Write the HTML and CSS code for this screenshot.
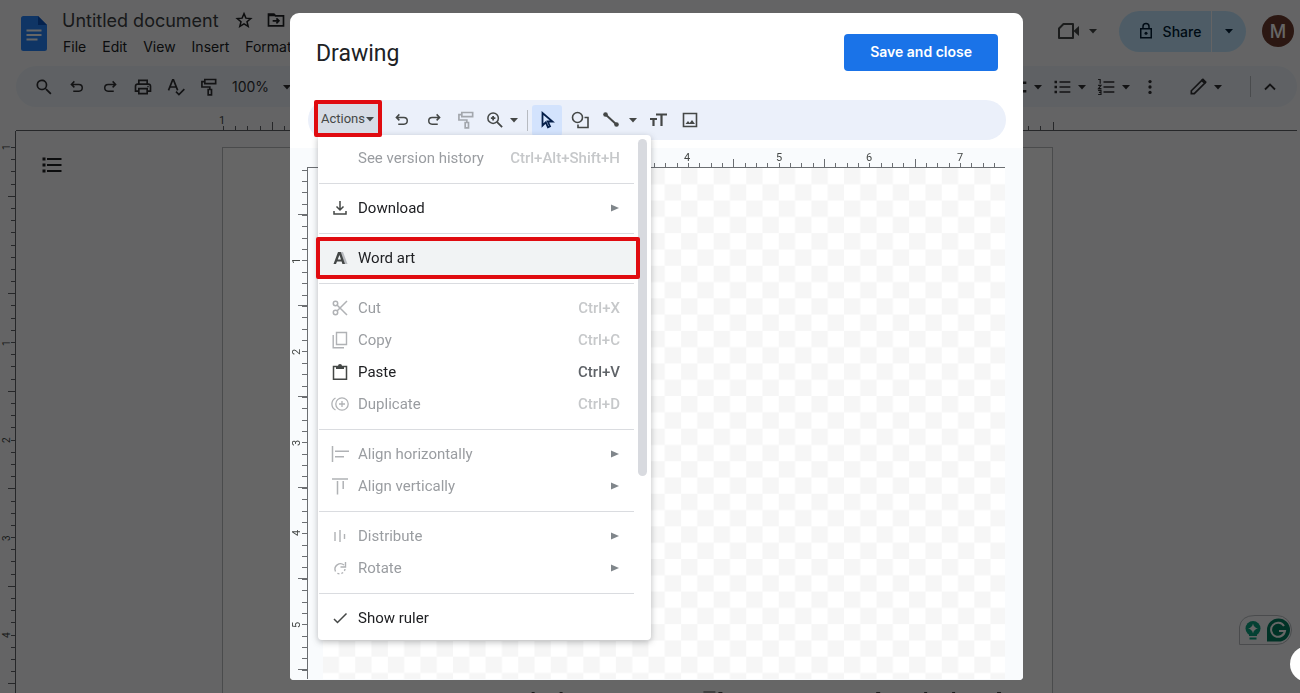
FILE: index.html
```html
<!DOCTYPE html>
<html lang="en">
<head>
<meta charset="utf-8">
<title>Untitled document</title>
<link rel="stylesheet" href="styles.css">
</head>
<body>
<svg class="defs" aria-hidden="true">
  <symbol id="undo" viewBox="0 0 24 24"><path d="M8.500 4.500 4.500 8.500l4 4M5 8.500h9.500a4.500 4.500 0 0 1 0 9H7" fill="none" stroke="currentColor" stroke-width="2"/></symbol>
  <symbol id="redo" viewBox="0 0 24 24"><path d="m15.500 4.500 4 4-4 4M19 8.500H9.500a4.500 4.500 0 0 0 0 9H17" fill="none" stroke="currentColor" stroke-width="2"/></symbol>
  <symbol id="paint" viewBox="0 0 24 24"><path d="M7 3h13v5H7zM7 5.500H3.500V12H13v3M11 15h4v6.500h-4z" fill="none" stroke="currentColor" stroke-width="2"/></symbol>
  <symbol id="down" viewBox="0 0 10 10"><path d="M1 3h8L5 7.500z" fill="currentColor"/></symbol>
  <symbol id="right" viewBox="0 0 10 10"><path d="M1 1.500 9 5 1 8.500z" fill="currentColor"/></symbol>
</svg>

<div class="app">
  <header class="header">
    <svg class="logo" viewBox="0 0 26 35"><path d="M2.500 0H17l9 9v23.500a2.500 2.500 0 0 1-2.500 2.500h-21A2.500 2.500 0 0 1 0 32.500v-30A2.500 2.500 0 0 1 2.500 0z" fill="#2684fc"/><path d="M17 0l9 9h-9z" fill="#0b55c4"/><path d="M5.500 14.500h15M5.500 19h15M5.500 23.500h11" stroke="#fff" stroke-width="2"/></svg>
    <div class="title-block">
      <div class="title-row">
        <span class="doc-title">Untitled document</span>
        <button class="plain" aria-label="Star"><svg class="i18" viewBox="0 0 24 24"><path d="m12 3.500 2.500 6 6.500.5-5 4.200 1.600 6.300L12 17.100l-5.600 3.400L8 14.200 3 10l6.500-.5z" fill="none" stroke="currentColor" stroke-width="2"/></svg></button>
        <button class="plain" aria-label="Move"><svg class="i20" viewBox="0 0 24 24"><path d="M3 5h6.500l2 2H21v12H3zM8 13h7M12.500 10l3 3-3 3" fill="none" stroke="currentColor" stroke-width="2"/><path d="M3 5h6.500l2 2.500H3z" fill="currentColor"/></svg></button>
      </div>
      <nav class="menubar"><button class="plain">File</button><button class="plain">Edit</button><button class="plain">View</button><button class="plain">Insert</button><button class="plain">Format</button></nav>
    </div>
    <div class="header-right">
      <button class="plain meet" aria-label="Meet"><svg class="i24" viewBox="0 0 24 24"><path d="M7.500 5H17v14H3V9.500z" fill="none" stroke="currentColor" stroke-width="2" stroke-linejoin="round"/><path d="M18 11.500 23 7v10l-5-4.500z" fill="currentColor"/></svg><svg class="i10" ><use href="#down"/></svg></button>
      <div class="share">
        <button class="share-main"><svg class="i18" viewBox="0 0 24 24"><path d="M5 9h14v12H5zM8 9V6a4 4 0 0 1 8 0v3" fill="none" stroke="currentColor" stroke-width="2"/><circle cx="12" cy="15" r="2" fill="currentColor"/></svg>Share</button>
        <button class="share-more" aria-label="Share options"><svg class="i10"><use href="#down"/></svg></button>
      </div>
      <button class="avatar">M</button>
    </div>
  </header>

  <div class="toolbar">
    <div class="tools-left">
      <button class="tool" aria-label="Search"><svg class="i20" viewBox="0 0 24 24"><path d="M15.500 14h-.8l-.3-.3A6.500 6.500 0 1 0 13.700 14.400l.3.300v.8l5.500 5.500 1.500-1.500zm-6 0a4.500 4.500 0 1 1 0-9 4.500 4.500 0 0 1 0 9z" fill="currentColor"/></svg></button>
      <button class="tool" aria-label="Undo"><svg class="i18"><use href="#undo"/></svg></button>
      <button class="tool" aria-label="Redo"><svg class="i18"><use href="#redo"/></svg></button>
      <button class="tool" aria-label="Print"><svg class="i20" viewBox="0 0 24 24"><path d="M7 8V4h10v4M7 17H3V11a2.500 2.500 0 0 1 2.500-2.500h13A2.500 2.500 0 0 1 21 11v6h-4M7 14h10v6H7z" fill="none" stroke="currentColor" stroke-width="2"/><circle cx="18" cy="11.500" r="1" fill="currentColor"/></svg></button>
      <button class="tool" aria-label="Spelling"><svg class="i20" viewBox="0 0 24 24"><path d="M3 16 8 3.500h1L14 16M5 12h7M12 17.500l3.500 3.500L22 14.500" fill="none" stroke="currentColor" stroke-width="2"/></svg></button>
      <button class="tool" aria-label="Paint format"><svg class="i20"><use href="#paint"/></svg></button>
      <button class="plain zoom">100%<svg class="i10"><use href="#down"/></svg></button>
    </div>
    <div class="tools-right">
      <button class="pair" aria-label="Checklist"><svg class="i20" viewBox="0 0 24 24"><path d="M5 7h17M5 17h17" stroke="currentColor" stroke-width="3"/></svg><svg class="i10"><use href="#down"/></svg></button>
      <button class="pair" aria-label="Bulleted list"><svg class="i20" viewBox="0 0 24 24"><path d="M9 6h13M9 12h13M9 18h13" stroke="currentColor" stroke-width="2"/><path d="M3 4.500h3v3H3zM3 10.500h3v3H3zM3 16.500h3v3H3z" fill="currentColor"/></svg><svg class="i10"><use href="#down"/></svg></button>
      <button class="pair" aria-label="Numbered list"><svg class="i20" viewBox="0 0 24 24"><path d="M9 6h13M9 12h13M9 18h13" stroke="currentColor" stroke-width="2"/><path d="M2.500 3H5v5M2.500 10H6l-3 4h3.500M2.500 16H6v5H2.500M3.500 18.500H6" fill="none" stroke="currentColor" stroke-width="1.400"/></svg><svg class="i10"><use href="#down"/></svg></button>
      <button class="more" aria-label="More"><svg class="i20" viewBox="0 0 24 24"><circle cx="12" cy="5.500" r="2"/><circle cx="12" cy="12" r="2"/><circle cx="12" cy="18.500" r="2"/></svg></button>
      <button class="pair mode" aria-label="Editing mode"><svg class="i20" viewBox="0 0 24 24"><path d="M4 20v-3.500L16.500 4l3.500 3.500L7.500 20z" fill="none" stroke="currentColor" stroke-width="2"/><path d="m16 3 2-1.500 4.500 4.500L21 8z" fill="currentColor"/></svg><svg class="i10"><use href="#down"/></svg></button>
      <span class="rule"></span>
      <button class="collapse" aria-label="Hide menus"><svg class="i20" viewBox="0 0 24 24"><path d="m6 15 6-6 6 6" fill="none" stroke="currentColor" stroke-width="2.200"/></svg></button>
    </div>
  </div>

  <svg class="ruler-x" shape-rendering="crispEdges">
    <path d="M16 23.500H1297" stroke="#5f6368"/>
    <path d="M223 21H1054" stroke="#5f6368" stroke-width="5" stroke-dasharray="1 11.200"/>
    <path d="M271.800 19H1054" stroke="#5f6368" stroke-width="9" stroke-dasharray="1 96.600"/>
    <text x="219" y="17">1</text>
  </svg>

  <div class="workspace">
    <svg class="ruler-y" shape-rendering="crispEdges">
      <path d="M15.500 0V562" stroke="#5f6368"/>
      <path d="M13 16V562" stroke="#5f6368" stroke-width="5" stroke-dasharray="1 11.190"/>
      <path d="M11.500 64.700V562" stroke="#5f6368" stroke-width="8" stroke-dasharray="1 96.500"/>
      <text transform="translate(10 19) rotate(-90)">1</text>
      <text transform="translate(10 215) rotate(-90)">1</text>
      <text transform="translate(10 312) rotate(-90)">2</text>
      <text transform="translate(10 410) rotate(-90)">3</text>
      <text transform="translate(10 507) rotate(-90)">4</text>
    </svg>
    <aside class="outline"><button class="plain" aria-label="Show outline"><svg class="i24" viewBox="0 0 24 24"><path d="M7 6h14.500M7 12h14.500M7 18h14.500" stroke="currentColor" stroke-width="2.200"/><path d="M2.500 4.500h3v3h-3zM2.500 10.500h3v3h-3zM2.500 16.500h3v3h-3z" fill="currentColor"/></svg></button></aside>
    <main class="page">
      <svg class="page-line" viewBox="0 0 830 2"><path d="M309 1.500h3M337 1.500h3M481 1h12M496 1.500h4M654 1.500h4M702 1.500h3M730 1.500h3M775 1.500h4" stroke="#444" stroke-width="1"/></svg>
    </main>
  </div>

  <div class="assistant">
    <svg viewBox="0 0 54 30"><path d="M.5 29.500V12Q2 .5 16 .5h22a14.500 14.500 0 0 1 0 29z" fill="#f9fbfd" stroke="#b8bcc0"/><circle cx="14" cy="13.500" r="7.500" fill="#0ba37f"/><path d="M10 18h8v3h-8zM10.500 22.500h7v2h-7z" fill="#0ba37f"/><path d="M14 8.500q.8 4.200 5 5-4.200.8-5 5-.8-4.200-5-5 4.200-.8 5-5z" fill="#fff"/><path d="M28 26.500V15a11.500 11.500 0 1 1 11.500 11.500z" fill="#027e5f"/><path d="M45 11a7 7 0 1 0 1 5h-6" fill="none" stroke="#fff" stroke-width="2"/></svg>
  </div>
</div>

<div class="backdrop">
  <section class="dialog" role="dialog" aria-labelledby="dialog-title">
    <header class="dialog-head"><h1 id="dialog-title">Drawing</h1><button class="save">Save and close</button></header>
    <div class="draw-tools">
      <div class="actions">
        <button class="actions-button" aria-expanded="true">Actions<svg class="i10"><use href="#down"/></svg></button>
        <div class="menu" role="menu">
          <div class="menu-list">
            <button class="item off" role="menuitem"><span class="ico"></span><span>See version history</span><kbd>Ctrl+Alt+Shift+H</kbd></button>
            <hr>
            <button class="item" role="menuitem"><svg class="ico" viewBox="0 0 18 18"><path d="M9 2v9M5.500 7.500 9 11l3.500-3.500M3 12v3h12v-3" fill="none" stroke="currentColor" stroke-width="1.500"/></svg><span>Download</span><svg class="sub"><use href="#right"/></svg></button>
            <hr>
            <button class="item marked" role="menuitem"><svg class="ico" viewBox="0 0 18 18"><path d="M9 3h3l4.500 12h-3z" fill="#b9bcc0"/><path fill-rule="evenodd" d="M7 3h2.800l4.200 12h-2.600l-.8-2.500H6L5 15H2.500zm1.400 3L6.800 10.500H10z" fill="currentColor"/></svg><span>Word art</span></button>
            <hr>
            <button class="item off" role="menuitem"><svg class="ico" viewBox="0 0 18 18"><g fill="none" stroke="currentColor" stroke-width="1.500"><circle cx="4.500" cy="4.500" r="2.200"/><circle cx="4.500" cy="13.500" r="2.200"/><path d="m6 6 10 10M6 12 16 2"/></g></svg><span>Cut</span><kbd>Ctrl+X</kbd></button>
            <button class="item off" role="menuitem"><svg class="ico" viewBox="0 0 18 18"><path d="M5.500 1.500h10v12h-10zM2.200 4v12.800H13" fill="none" stroke="currentColor" stroke-width="1.400"/></svg><span>Copy</span><kbd>Ctrl+C</kbd></button>
            <button class="item" role="menuitem"><svg class="ico" viewBox="0 0 18 18"><path d="M2.500 3.500h13v12.700h-13z" fill="none" stroke="currentColor" stroke-width="1.500"/><path d="M5 3h2a2 2 0 0 1 4 0h2v3H5z" fill="currentColor"/></svg><span>Paste</span><kbd>Ctrl+V</kbd></button>
            <button class="item off" role="menuitem"><svg class="ico" viewBox="0 0 18 18"><path d="M4.500 3a6.800 6.800 0 0 0 0 12M8 9h6M11 6v6" fill="none" stroke="currentColor" stroke-width="1.300"/><circle cx="11" cy="9" r="6.200" fill="none" stroke="currentColor" stroke-width="1.300"/></svg><span>Duplicate</span><kbd>Ctrl+D</kbd></button>
            <hr>
            <button class="item off" role="menuitem"><svg class="ico" viewBox="0 0 18 18"><path d="M1.500 1v16M4 6.200h14M4 11.800h9" stroke="currentColor" stroke-width="1.500"/></svg><span>Align horizontally</span><svg class="sub"><use href="#right"/></svg></button>
            <button class="item off" role="menuitem"><svg class="ico" viewBox="0 0 18 18"><path d="M1 2h16M6.500 4v13.500M12.200 4v8" stroke="currentColor" stroke-width="1.500"/></svg><span>Align vertically</span><svg class="sub"><use href="#right"/></svg></button>
            <hr>
            <button class="item off" role="menuitem"><svg class="ico" viewBox="0 0 18 18"><path d="M4 5v9M9 3v12M13.500 7v5" stroke="currentColor" stroke-width="1.400"/></svg><span>Distribute</span><svg class="sub"><use href="#right"/></svg></button>
            <button class="item off" role="menuitem"><svg class="ico" viewBox="0 0 18 18"><path d="M4.500 12.500A5.500 5.500 0 0 1 13 6M14.500 3v5h-5" fill="none" stroke="currentColor" stroke-width="1.400"/><path d="M14 10a5.500 5.500 0 0 1-9 3.500" fill="none" stroke="currentColor" stroke-width="1.400" stroke-dasharray="2 2"/></svg><span>Rotate</span><svg class="sub"><use href="#right"/></svg></button>
            <hr>
            <button class="item" role="menuitem"><svg class="ico" viewBox="0 0 18 18"><path d="m3 10 3.500 3.500 9-9" fill="none" stroke="currentColor" stroke-width="1.500"/></svg><span>Show ruler</span></button>
          </div>
          <div class="scroll"><span class="thumb"></span></div>
        </div>
      </div>
      <button class="dtool" aria-label="Undo"><svg class="i18"><use href="#undo"/></svg></button>
      <button class="dtool" aria-label="Redo"><svg class="i18"><use href="#redo"/></svg></button>
      <button class="dtool faint" aria-label="Paint format"><svg class="i20"><use href="#paint"/></svg></button>
      <button class="dpair" aria-label="Zoom"><svg class="i18" viewBox="0 0 24 24"><path d="M14.500 14.500 21.500 21.500M9.500 6.500v6M6.500 9.500h6" stroke="currentColor" stroke-width="2.400"/><circle cx="9.500" cy="9.500" r="7" fill="none" stroke="currentColor" stroke-width="2"/></svg><svg class="i10"><use href="#down"/></svg></button>
      <span class="rule"></span>
      <button class="dtool selected" aria-label="Select"><svg class="i18" viewBox="0 0 18 18"><path d="M4.500 2v12.500l3.300-3.200 2.200 5 2-.9-2.200-4.900H14.500z" fill="none" stroke="currentColor" stroke-width="1.800"/></svg></button>
      <button class="dtool" aria-label="Shape"><svg class="i18" viewBox="0 0 18 18"><circle cx="6.500" cy="6.500" r="5" fill="none" stroke="currentColor" stroke-width="1.600"/><path d="M13.500 6.500H17V16.500H7V13.500" fill="none" stroke="currentColor" stroke-width="1.600"/></svg></button>
      <button class="dpair line" aria-label="Line"><svg class="i18" viewBox="0 0 18 18"><path d="m3 3 12 11" stroke="currentColor" stroke-width="2"/><circle cx="3.500" cy="3.500" r="2.300" fill="currentColor"/><circle cx="14.500" cy="13.500" r="2.300" fill="currentColor"/></svg><svg class="i10"><use href="#down"/></svg></button>
      <button class="dtool" aria-label="Text box"><svg class="i18" viewBox="0 0 18 18"><path d="M7 3.500h11M12.500 3.500V15M1 8h7M4.500 8v7" stroke="currentColor" stroke-width="2.200"/></svg></button>
      <button class="dtool" aria-label="Image"><svg class="i18" viewBox="0 0 18 18"><path d="M2.500 2.500h13v13h-13z" fill="none" stroke="currentColor" stroke-width="1.600"/><path d="m4.500 13 2.500-3 1.700 2 2.300-3 3 4z" fill="currentColor"/></svg></button>
    </div>
    <svg class="surface">
      <defs><pattern id="checks" x="32.700" y="20" width="32.580" height="32.580" patternUnits="userSpaceOnUse"><path d="M0 0h16.290v16.290H0zM16.290 16.290h16.290v16.290H16.290z" fill="#f6f6f6"/></pattern></defs>
      <path d="M17 20H715V531H17z" fill="#fff"/>
      <path d="M17 20H33V531H17z" fill="#f9fbfd"/>
      <path d="M33 20H715V531H33z" fill="url(#checks)"/>
      <g stroke="#6b6e72" shape-rendering="crispEdges">
        <path d="M17 19.500H715M17.500 20V531"/>
        <path d="M35 17.500H711" stroke-width="5" stroke-dasharray="1 10.340"/>
        <path d="M80.300 15.500H711" stroke-width="9" stroke-dasharray="1 89.700"/>
        <path d="M14.500 21.500V531" stroke-width="5" stroke-dasharray="1 10.370"/>
        <path d="M12.500 66V531" stroke-width="9" stroke-dasharray="1 90"/>
      </g>
      <text x="394" y="13">4</text><text x="486" y="13">5</text><text x="576" y="13">6</text><text x="667" y="13">7</text>
      <text transform="translate(10 116) rotate(-90)">1</text>
      <text transform="translate(10 207) rotate(-90)">2</text>
      <text transform="translate(10 298) rotate(-90)">3</text>
      <text transform="translate(10 388) rotate(-90)">4</text>
      <text transform="translate(10 480) rotate(-90)">5</text>
    </svg>
  </section>
  <div class="bubble"></div>
</div>
</body>
</html>
```
FILE: styles.css
```css
* { box-sizing: border-box; }
body { margin: 0; height: 100vh; overflow: hidden; font-family: Roboto, "Liberation Sans", sans-serif; color: #202124; background: #f9fbfd; }
button { margin: 0; padding: 0; border: 0; background: none; color: inherit; font: inherit; display: flex; align-items: center; justify-content: center; }
svg { display: block; flex: none; }
text { font-family: Roboto, sans-serif; font-size: 11px; fill: #444746; }
.defs { position: absolute; width: 0; height: 0; }
.i10 { width: 10px; height: 10px; }
.i18 { width: 18px; height: 18px; }
.i20 { width: 20px; height: 20px; }
.i24 { width: 24px; height: 24px; }

.app { height: 100vh; display: flex; flex-direction: column; font-family: Inter, Roboto, sans-serif; font-size: 14px; }
.header { height: 66px; padding: 0 6px 4px 21px; display: flex; align-items: center; flex: none; }
.logo { width: 26px; height: 35px; margin-top: 4px; }
.title-block { margin-left: 15px; padding-top: 4px; }
.title-row { display: flex; align-items: center; gap: 13px; height: 26px; }
.doc-title { font-size: 18px; margin-right: 3px; color: #3c4043; }
.menubar { display: flex; gap: 16px; height: 26px; padding-left: 1px; }
.header-right { margin-left: auto; display: flex; align-items: center; }
.meet { gap: 8px; color: #444746; margin-right: 21px; }
.share { display: flex; height: 41px; border-radius: 21px; overflow: hidden; background: #c2e7ff; color: #001d35; margin-right: 16px; font-weight: 500; }
.share-main { width: 92px; gap: 8px; padding-left: 8px; }
.share-more { width: 35px; border-left: 1px solid #f9fbfd; }
.avatar { width: 32px; height: 32px; border-radius: 50%; background: #6d3b2d; color: #fff; font-size: 18px; font-weight: 500; }

.toolbar { height: 41px; margin: 0 3px 0 16px; padding: 0 11px; border-radius: 21px; background: #edf2fa; display: flex; align-items: center; flex: none; color: #303134; }
.tools-left, .tools-right { display: flex; align-items: center; }
.tools-right { margin-left: auto; }
.tool { width: 33px; height: 32px; }
.zoom { gap: 13px; margin-left: 7px; }
.pair { width: 44px; height: 32px; justify-content: flex-start; gap: 5px; padding-left: 2px; }
.more { width: 24px; height: 32px; fill: currentColor; }
.mode { margin-left: 24px; }
.rule { width: 1px; height: 21px; background: #b7bbc1; }
.mode + .rule { margin-left: 20px; }
.collapse { width: 32px; height: 32px; margin-left: 3px; }

.ruler-x { width: 100%; height: 24px; flex: none; }
.workspace { flex: 1; display: flex; min-height: 0; }
.ruler-y { width: 16px; height: 100%; }
.ruler-y text { font-size: 10px; }
.outline { width: 206px; flex: none; padding: 22px 24px; }
.page { width: 831px; margin-top: 16px; border: 1px solid #b8bbbf; border-bottom: 0; background: #fff; display: flex; flex-direction: column; justify-content: flex-end; overflow: hidden; }
.page-line { width: 100%; height: 2px; }
.assistant { position: absolute; right: 7px; bottom: 48px; width: 54px; height: 30px; }

.backdrop { position: fixed; inset: 0; padding: 13px 0 13px 13px; background: rgba(0, 0, 0, .6); display: flex; justify-content: center; }
.dialog { width: 733px; max-width: 100%; background: #fff; border-radius: 9px 9px 4px 4px; display: flex; flex-direction: column; }
.dialog-head { height: 87px; padding: 0 25px 9px 26px; display: flex; align-items: center; justify-content: space-between; flex: none; }
h1 { margin: 0; padding-top: 2px; font-size: 23px; font-weight: 400; }
.save { height: 37px; padding: 0 26px 2px; border-radius: 4px; background: #1a73e8; color: #fff; font: 600 14px Inter, Roboto, sans-serif; }
.draw-tools { height: 40px; margin: 0 17px 8px 18px; border-radius: 20px; background: #ebf0fa; display: flex; align-items: center; flex: none; color: #444746; }
.actions { position: relative; margin: 0 4px 0 6px; align-self: flex-start; }
.actions-button { position: relative; z-index: 2; width: 68px; height: 37px; border: 4px solid #e00b10; border-radius: 2px; background: #d6dce5; font-size: 13px; }
.dtool { width: 32px; height: 32px; }
.faint { color: #a3a7ad; }
.dpair { width: 38px; height: 32px; gap: 5px; padding-left: 2px; }
.draw-tools > .rule { margin: 0 4px 0 7px; }
.selected { width: 30px; height: 31px; margin-right: 2px; border-radius: 3px; background: #d3e3fd; color: #041e49; }
.line { width: 46px; gap: 8px; }
.surface { width: 100%; flex: 1; min-height: 0; background: #f9fbfd; border-radius: 0 0 4px 4px; }

.menu { position: absolute; left: 4px; top: 35px; z-index: 1; width: 333px; padding: 7px 0 6px 1px; border-radius: 0 4px 4px 4px; background: #fff; box-shadow: 0 2px 6px rgba(60, 64, 67, .35); display: flex; isolation: isolate; }
.menu-list { flex: 1; }
.item { position: relative; width: 100%; height: 32px; padding: 0 14px 0 12px; justify-content: flex-start; font-size: 15px; color: #202124; }
.item .ico { width: 18px; height: 18px; margin-right: 9px; color: #444746; }
.item kbd { margin-left: auto; font: 500 15px Roboto, sans-serif; color: #5f6368; }
.item.off { color: #9a9da1; }
.item.off .ico { color: #b0b2b5; }
.item.off kbd { color: #c6c8ca; }
.item .sub { width: 10px; height: 10px; margin-left: auto; color: #80868b; }
.marked::after { content: ""; position: absolute; inset: -5px -6px -5px -3px; z-index: -1; border: 4px solid #e00b10; border-radius: 2px; background: #f1f3f4; }
hr { height: 1px; margin: 9px 0 8px; border: 0; background: #dadce0; }
.scroll { width: 17px; display: flex; justify-content: center; margin-top: -3px; position: relative; z-index: -2; }
.thumb { width: 9px; height: 337px; border-radius: 5px; background: #d8dadf; }
.bubble { position: fixed; right: -26px; bottom: 11px; width: 36px; height: 36px; border-radius: 50%; background: #fff; }
```
